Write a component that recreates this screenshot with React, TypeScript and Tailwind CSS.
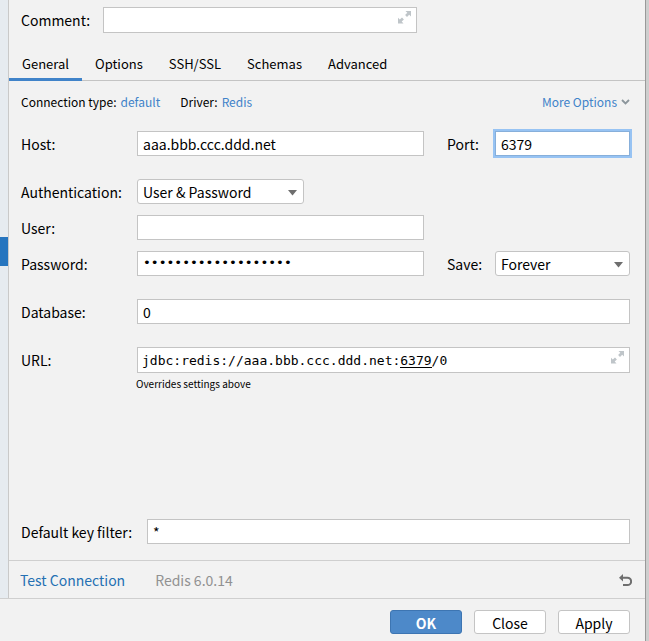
import { useState, type ReactNode } from "react";
import { clsx } from "clsx";

const fieldClass =
  "h-[25px] min-w-0 border border-[#c4c4c4] bg-white px-[5px] text-[14px] leading-[23px] text-black outline-none";

function FieldLabel({ htmlFor, className, children }: { htmlFor: string; className?: string; children: ReactNode }) {
  return (
    <label htmlFor={htmlFor} className={clsx("shrink-0 pt-0.5 leading-[23px]", className)}>
      {children}
    </label>
  );
}

function ExpandButton({ label }: { label: string }) {
  return (
    <button type="button" aria-label={label} className="absolute right-[6px] top-[4px] text-[#bfc5c9]">
      <svg width="13" height="13" viewBox="0 0 13 13" fill="currentColor" className="block">
        <path d="M7.5 0H13v5.5l-1.8-1.8-2.2 2.2L7.1 4l2.2-2.2zM0 6.8l1.8 1.8L4 6.5l1.9 1.9-2.2 2.1 1.8 1.9H0z" />
      </svg>
    </button>
  );
}

function Dropdown({ id, options, className }: { id: string; options: string[]; className: string }) {
  return (
    <div className={clsx("relative", className)}>
      <select
        id={id}
        className="block h-[25px] w-full appearance-none rounded-[3px] border border-[#c4c4c4] bg-white px-[5px] pt-px text-[14px] leading-[23px] text-black outline-none"
      >
        {options.map((option) => (
          <option key={option}>{option}</option>
        ))}
      </select>
      <svg width="9" height="6" viewBox="0 0 9 6" className="pointer-events-none absolute right-[7px] top-[11px]">
        <path d="M0 0h9L4.5 5.5z" fill="#6e6e6e" />
      </svg>
    </div>
  );
}

const tabs = ["General", "Options", "SSH/SSL", "Schemas", "Advanced"];

export default function App() {
  const [activeTab, setActiveTab] = useState("General");

  return (
    <div className="flex min-h-screen bg-[#f2f2f2] font-['Noto_Sans_CJK_SC',sans-serif] text-[14px] text-black">
      <div className="flex min-w-0 flex-1 flex-col">
        <div className="flex">
          <aside className="w-[9px] shrink-0 border-r border-[#c9c9c9] bg-[#e6ebf0] pt-[237px]">
            <div className="h-[29px] bg-[#2675bf]" />
          </aside>

          <main className="min-w-0 flex-1">
            <div className="flex pl-3 pr-[15px] pt-[7px]">
              <FieldLabel htmlFor="comment" className="w-[82px]">Comment:</FieldLabel>
              <div className="relative w-[314px]">
                <input id="comment" className={clsx(fieldClass, "block h-[26px] w-full pr-6")} />
                <ExpandButton label="Expand comment" />
              </div>
            </div>

            <div role="tablist" className="mt-[15px] flex border-b border-[#c4c4c4] text-[13px]">
              {tabs.map((tab) => (
                <button
                  key={tab}
                  type="button"
                  role="tab"
                  aria-selected={tab === activeTab}
                  onClick={() => setActiveTab(tab)}
                  className={clsx(
                    "-mb-px h-[33px] border-b-[3px] px-[13px] pt-0.5 leading-[28px]",
                    tab === activeTab ? "border-[#4083c9]" : "border-transparent",
                  )}
                >
                  {tab}
                </button>
              ))}
            </div>

            <div className="flex pl-3 pr-[15px] pt-[11px] text-[12px] leading-5">
              <span>Connection type:</span>
              <a href="#connection-type" className="ml-1 text-[#4083c9]">default</a>
              <span className="ml-5">Driver:</span>
              <a href="#driver" className="ml-1 text-[#4083c9]">Redis</a>
              <button type="button" className="ml-auto flex items-center gap-1 text-[#4083c9]">
                More Options
                <svg width="9" height="6" viewBox="0 0 9 6" fill="none" stroke="#8c969c" strokeWidth="1.8">
                  <path d="M1 1l3.5 3.5L8 1" />
                </svg>
              </button>
            </div>

            <form className="pl-3 pr-[15px] pt-[19px]">
              <div className="flex">
                <FieldLabel htmlFor="host" className="w-[116px]">Host:</FieldLabel>
                <input id="host" defaultValue="aaa.bbb.ccc.ddd.net" className={clsx(fieldClass, "flex-1")} />
                <FieldLabel htmlFor="port" className="ml-[23px] w-[48px]">Port:</FieldLabel>
                <input
                  id="port"
                  defaultValue="6379"
                  className="h-[25px] w-[135px] border border-[#87afda] bg-white px-[5px] leading-[23px] outline-2 outline-[#97c3f3]"
                />
              </div>

              <div className="mt-[23px] flex">
                <FieldLabel htmlFor="auth" className="w-[116px]">Authentication:</FieldLabel>
                <Dropdown id="auth" options={["User & Password", "No auth"]} className="w-[167px]" />
              </div>

              <div className="mt-[11px] flex">
                <FieldLabel htmlFor="user" className="w-[116px]">User:</FieldLabel>
                <input id="user" className={clsx(fieldClass, "flex-1")} />
                <div className="w-[206px] shrink-0" />
              </div>

              <div className="mt-[11px] flex">
                <FieldLabel htmlFor="password" className="w-[116px]">Password:</FieldLabel>
                <input
                  id="password"
                  type="password"
                  defaultValue="correct-horse-stapl"
                  className="h-[25px] min-w-0 flex-1 border border-[#c4c4c4] bg-white px-[5px] pb-[3px] font-['DejaVu_Sans_Mono',monospace] text-[13px] outline-none"
                />
                <FieldLabel htmlFor="save" className="ml-[23px] w-[48px]">Save:</FieldLabel>
                <Dropdown id="save" options={["Forever", "Until restart", "Never"]} className="w-[135px]" />
              </div>

              <div className="mt-[23px] flex">
                <FieldLabel htmlFor="database" className="w-[116px]">Database:</FieldLabel>
                <input id="database" defaultValue="0" className={clsx(fieldClass, "flex-1")} />
              </div>

              <div className="mt-[23px] flex">
                <FieldLabel htmlFor="url" className="w-[116px]">URL:</FieldLabel>
                <div className="relative flex-1 font-['DejaVu_Sans_Mono',monospace] text-[13px]">
                  <input
                    id="url"
                    defaultValue="jdbc:redis://aaa.bbb.ccc.ddd.net:6379/0"
                    className="block h-[26px] w-full border border-[#c4c4c4] bg-white pl-1 pr-6 outline-none"
                  />
                  <div className="pointer-events-none absolute left-[5px] top-5 ml-[33ch] h-px w-[4ch] bg-black" />
                  <ExpandButton label="Expand URL" />
                </div>
              </div>
              <p className="pl-[115px] pt-0.5 text-[10px] leading-[18px]">Overrides settings above</p>

              <div className="mt-[126px] flex">
                <FieldLabel htmlFor="filter" className="w-[126px]">Default key filter:</FieldLabel>
                <input id="filter" defaultValue="*" className={clsx(fieldClass, "flex-1")} />
              </div>
            </form>

            <div className="mt-4 flex h-[38px] items-center border-t border-[#cfcfcf] pl-[11px] pr-[13px] pt-0.5">
              <button type="button" className="text-[#2470b3]">Test Connection</button>
              <span className="ml-[30px] text-[#919191]">Redis 6.0.14</span>
              <button type="button" aria-label="Revert changes" className="ml-auto">
                <svg width="13" height="13" viewBox="0 0 13 13" className="block">
                  <path d="M4 0v7.4L0 3.7z" fill="#6e6e6e" />
                  <path d="M3.5 3.7H8.4a3.7 3.7 0 0 1 0 7.4H4" fill="none" stroke="#6e6e6e" strokeWidth="2" />
                </svg>
              </button>
            </div>
          </main>
        </div>

        <footer className="flex justify-end gap-3 border-t border-[#cfcfcf] pr-[15px] pt-[11px]">
          <button type="button" className="h-6 w-[72px] rounded-[3px] border border-[#3d75b2] bg-[#4d89c9] font-bold leading-[24px] text-white">
            OK
          </button>
          <button type="button" className="h-6 w-[72px] rounded-[3px] border border-[#c4c4c4] bg-white leading-[24px]">
            Close
          </button>
          <button type="button" className="h-6 w-[72px] rounded-[3px] border border-[#c4c4c4] bg-white leading-[24px]">
            Apply
          </button>
        </footer>
      </div>

      <div className="w-1 shrink-0 border-l border-[#999999] bg-[#cecece]" />
    </div>
  );
}
